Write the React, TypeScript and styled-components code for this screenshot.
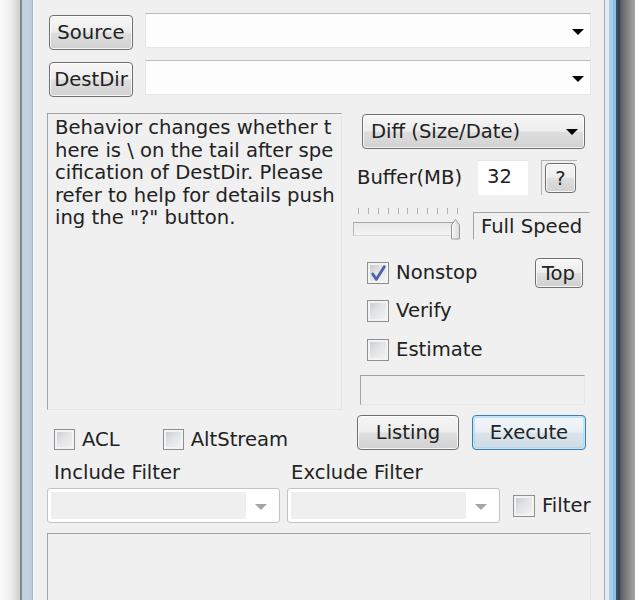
import React from "react";
import styled, { createGlobalStyle, css } from "styled-components";

const GlobalStyle = createGlobalStyle`
  html, body { margin: 0; padding: 0; background: #ffffff; }
  body { font-family: "DejaVu Sans", Verdana, sans-serif; }
`;

const INK = "#222222";
const FONT_SIZE = "19.6px";

const Screen = styled.div`
  display: flex;
  width: 635px;
  height: 600px;
  overflow: hidden;
`;

const DesktopShadow = styled.div<{ $side: "left" | "right" }>`
  flex: none;
  width: ${(p) => (p.$side === "left" ? 20 : 18)}px;
  background: ${(p) =>
    p.$side === "left"
      ? "linear-gradient(to right, #fbfbfb 0%, #ededed 55%, #cdcdcd 100%)"
      : "linear-gradient(to right, #585b5e 0%, #808080 40%, #b5b5b5 100%)"};
`;

const Frame = styled.div<{ $side: "left" | "right" }>`
  flex: none;
  width: ${(p) => (p.$side === "left" ? 15 : 16)}px;
  background: ${(p) =>
    p.$side === "left"
      ? "linear-gradient(to right, #80868d 0 2px, #c2d0e0 2px 9px, #bccde1 9px 12px, #a8b9cc 12px 13px, #f2f5f8 13px 15px)"
      : "linear-gradient(to right, #a9a9a9 0 1px, #e4edf5 1px 5px, #a9cbec 5px 9px, #92b9df 9px 12px, #2d5674 12px 14px, #3e444a 14px 16px)"};
`;

const Client = styled.div`
  flex: 1;
  box-sizing: border-box;
  background: #f0f0f0;
  padding: 13px 13px 0 12px;
  display: flex;
  flex-direction: column;
  color: ${INK};
  font-size: ${FONT_SIZE};
`;

const PathRow = styled.div<{ $first?: boolean }>`
  display: flex;
  align-items: flex-start;
  gap: 12px;
  margin-top: ${(p) => (p.$first ? 0 : 10)}px;
`;

const PushButton = styled.button<{ $w: number; $h: number; $default?: boolean }>`
  flex: none;
  box-sizing: border-box;
  width: ${(p) => p.$w}px;
  height: ${(p) => p.$h}px;
  padding: 0;
  font-family: inherit;
  font-size: ${FONT_SIZE};
  color: ${INK};
  border: 1px solid #707070;
  border-radius: 4px;
  background: linear-gradient(#f6f6f6 0%, #ededed 48%, #dedede 52%, #d1d1d1 100%);
  box-shadow: inset 0 0 0 1px rgba(255, 255, 255, 0.8);
  ${(p) =>
    p.$default &&
    css`
      border-color: #3b80b5;
      background: linear-gradient(#f2f7fa 0%, #e8eff4 48%, #d9e3ea 52%, #cfdbe4 100%);
      box-shadow: inset 0 0 0 1px #c4e6f8, inset 0 0 0 2px rgba(160, 214, 242, 0.6);
    `}
`;

const SideButton = styled(PushButton)`
  margin: 2px 0 0 2px;
`;

const PathCombo = styled.div`
  flex: 1;
  height: 35px;
  box-sizing: border-box;
  background: #fdfdfd;
  border: 1px solid #e4e6ea;
  border-top-color: #b9bbc0;
  display: flex;
  align-items: center;
  justify-content: flex-end;
  padding: 2px 6px 0 0;
`;

const Arrow = styled.span<{ $color: string; $size?: number }>`
  flex: none;
  width: 0;
  height: 0;
  border-left: ${(p) => p.$size ?? 6}px solid transparent;
  border-right: ${(p) => p.$size ?? 6}px solid transparent;
  border-top: ${(p) => p.$size ?? 6}px solid ${(p) => p.$color};
`;

const MainArea = styled.div`
  display: grid;
  grid-template-columns: 295px 1fr;
  column-gap: 11px;
  margin-top: 16px;
`;

const Column = styled.div`
  display: flex;
  flex-direction: column;
  align-items: flex-start;
`;

const SunkenPanel = styled.div<{ $w?: number; $h: number }>`
  flex: none;
  box-sizing: border-box;
  width: ${(p) => (p.$w ? `${p.$w}px` : "100%")};
  height: ${(p) => p.$h}px;
  border: 1px solid;
  border-color: #a3a3a3 #e6e6e6 #e6e6e6 #a3a3a3;
  background: #f0f0f0;
`;

const MessageBox = styled(SunkenPanel)`
  padding: 3px 0 0 7px;
  line-height: 22.5px;
  white-space: pre;
  overflow: hidden;
`;

const OptionRow = styled.div`
  display: flex;
  align-items: center;
  height: 21px;
  margin-top: 19px;
  padding-left: 7px;
  gap: 43px;
`;

const CheckItem = styled.label<{ $top?: number; $left?: number }>`
  display: flex;
  align-items: center;
  gap: 7px;
  margin-top: ${(p) => p.$top ?? 0}px;
  margin-left: ${(p) => p.$left ?? 0}px;
  line-height: 22px;
  white-space: nowrap;
`;

const CheckBox = styled.span<{ $size: number }>`
  flex: none;
  position: relative;
  box-sizing: border-box;
  width: ${(p) => p.$size}px;
  height: ${(p) => p.$size}px;
  border: 1px solid #8e8f8f;
  background: linear-gradient(135deg, #c4c7cb 0%, #e2e3e5 45%, #f5f5f5 100%);
  box-shadow: inset 0 0 0 2px #f3f3f3;
`;

const CheckMark = styled.svg`
  position: absolute;
  left: 2px;
  top: 1px;
`;

const DiffCombo = styled.div`
  box-sizing: border-box;
  width: 223px;
  height: 35px;
  margin: 1px 0 0 9px;
  padding: 0 6px 0 8px;
  display: flex;
  align-items: center;
  justify-content: space-between;
  border: 1px solid #707070;
  border-radius: 4px;
  background: linear-gradient(#f6f6f6 0%, #ededed 48%, #dedede 52%, #d1d1d1 100%);
  box-shadow: inset 0 0 0 1px rgba(255, 255, 255, 0.8);
  white-space: nowrap;
`;

const BufferRow = styled.div`
  display: flex;
  align-items: center;
  height: 35px;
  margin-top: 11px;
`;

const BufferLabel = styled.span`
  flex: none;
  width: 121px;
  margin-left: 4px;
  white-space: nowrap;
`;

const NumberField = styled.div`
  flex: none;
  box-sizing: border-box;
  width: 50px;
  height: 35px;
  padding: 0 0 4px 9px;
  background: #ffffff;
  border-top: 1px solid #e6e6e6;
  display: flex;
  align-items: center;
`;

const HelpFrame = styled.div`
  flex: none;
  box-sizing: border-box;
  width: 36px;
  height: 35px;
  margin-left: 13px;
  padding: 2px 0 0 3px;
  border-top: 1px solid #b3b3b3;
  border-left: 1px solid #b3b3b3;
`;

const SliderRow = styled.div`
  display: flex;
  align-items: flex-end;
  height: 35px;
  margin-top: 10px;
`;

const Slider = styled.div`
  flex: none;
  width: 108px;
  height: 35px;
  display: flex;
  flex-direction: column;
  position: relative;
`;

const Ticks = styled.div`
  display: flex;
  justify-content: space-between;
  width: 100px;
  margin: 3px 0 0 5px;
  height: 6px;
`;

const Tick = styled.span`
  width: 1px;
  height: 6px;
  background: #b0b0b0;
`;

const Track = styled.div`
  box-sizing: border-box;
  width: 101px;
  height: 14px;
  margin-top: 8px;
  border: 1px solid;
  border-color: #a6a6a6 #dadada #dadada #b6b6b6;
  border-right: 2px solid #7a7a7a;
  background: linear-gradient(#e8e8e8, #f4f4f4);
`;

const Thumb = styled.svg`
  position: absolute;
  left: 97px;
  top: 12px;
`;

const SpeedBox = styled(SunkenPanel)`
  margin-left: 12px;
  padding: 0 0 0 7px;
  display: flex;
  align-items: center;
  border-color: #a3a3a3 transparent transparent #a3a3a3;
  white-space: nowrap;
`;

const NonstopRow = styled.div`
  display: flex;
  align-items: center;
  justify-content: space-between;
  align-self: stretch;
  height: 30px;
  margin-top: 18px;
  padding: 0 8px 0 14px;
`;

const StatusBox = styled(SunkenPanel)`
  margin: 14px 0 0 7px;
`;

const ActionRow = styled.div`
  display: flex;
  gap: 13px;
  margin: 10px 0 0 4px;
`;

const FilterGrid = styled.div`
  display: grid;
  grid-template-columns: 233px 213px 1fr;
  grid-template-rows: 22px 35px;
  column-gap: 7px;
  row-gap: 4px;
  margin-top: 12px;
`;

const FilterLabel = styled.span<{ $pad: number }>`
  padding-left: ${(p) => p.$pad}px;
  line-height: 22px;
  white-space: nowrap;
`;

const FilterCombo = styled.div`
  box-sizing: border-box;
  height: 35px;
  border: 1px solid #c3c3c3;
  border-radius: 3px;
  background: #ffffff;
  padding: 3px;
  display: flex;
  align-items: center;
`;

const FilterField = styled.div`
  flex: 1;
  align-self: stretch;
  background: #efefef;
`;

const FilterButton = styled.div`
  flex: none;
  width: 30px;
  display: flex;
  justify-content: center;
  padding-top: 2px;
`;

const BottomBox = styled(SunkenPanel)`
  margin-top: 10px;
`;

function Check({ checked = false, size = 21 }: { checked?: boolean; size?: number }) {
  return (
    <CheckBox $size={size}>
      {checked && (
        <CheckMark width={size - 5} height={size - 4} viewBox="0 0 16 17">
          <path
            d="M2.5 9.5 L6 14.5 L13.5 2.5"
            fill="none"
            stroke="#4a62a6"
            strokeWidth="2.6"
            strokeLinecap="round"
            strokeLinejoin="round"
          />
        </CheckMark>
      )}
    </CheckBox>
  );
}

const MESSAGE = [
  "Behavior changes whether t",
  "here is \\ on the tail after spe",
  "cification of DestDir. Please",
  "refer to help for details push",
  'ing the "?" button.',
].join("\n");

export default function App() {
  return (
    <>
      <GlobalStyle />
      <Screen>
        <DesktopShadow $side="left" />
        <Frame $side="left" />
        <Client>
          <PathRow $first>
            <SideButton $w={84} $h={35}>Source</SideButton>
            <PathCombo>
              <Arrow $color="#000" />
            </PathCombo>
          </PathRow>
          <PathRow>
            <SideButton $w={84} $h={35}>DestDir</SideButton>
            <PathCombo>
              <Arrow $color="#000" />
            </PathCombo>
          </PathRow>

          <MainArea>
            <Column>
              <MessageBox $h={297}>{MESSAGE}</MessageBox>
              <OptionRow>
                <CheckItem>
                  <Check />
                  ACL
                </CheckItem>
                <CheckItem>
                  <Check />
                  AltStream
                </CheckItem>
              </OptionRow>
            </Column>

            <Column>
              <DiffCombo>
                <span>Diff (Size/Date)</span>
                <Arrow $color="#000" />
              </DiffCombo>
              <BufferRow>
                <BufferLabel>Buffer(MB)</BufferLabel>
                <NumberField>32</NumberField>
                <HelpFrame>
                  <PushButton $w={31} $h={30}>?</PushButton>
                </HelpFrame>
              </BufferRow>
              <SliderRow>
                <Slider>
                  <Ticks>
                    {Array.from({ length: 11 }).map((_, i) => (
                      <Tick key={i} />
                    ))}
                  </Ticks>
                  <Track />
                  <Thumb width="11" height="23" viewBox="0 0 11 23">
                    <defs>
                      <linearGradient id="thumbFill" x1="0" y1="0" x2="1" y2="0">
                        <stop offset="0" stopColor="#f8f8f8" />
                        <stop offset="1" stopColor="#dadada" />
                      </linearGradient>
                    </defs>
                    <path
                      d="M1.5 22 L1.5 8 L5.5 2.5 L9.5 8 L9.5 22 Z"
                      fill="url(#thumbFill)"
                      stroke="#9a9a9a"
                      strokeWidth="1"
                      strokeLinejoin="round"
                    />
                  </Thumb>
                </Slider>
                <SpeedBox $w={117} $h={28}>Full Speed</SpeedBox>
              </SliderRow>
              <NonstopRow>
                <CheckItem>
                  <Check checked size={22} />
                  Nonstop
                </CheckItem>
                <PushButton $w={48} $h={30}>Top</PushButton>
              </NonstopRow>
              <CheckItem $top={12} $left={14}>
                <Check size={22} />
                Verify
              </CheckItem>
              <CheckItem $top={17} $left={14}>
                <Check size={22} />
                Estimate
              </CheckItem>
              <StatusBox $w={225} $h={30} />
              <ActionRow>
                <PushButton $w={102} $h={35}>Listing</PushButton>
                <PushButton $w={114} $h={35} $default>Execute</PushButton>
              </ActionRow>
            </Column>
          </MainArea>

          <FilterGrid>
            <FilterLabel $pad={7}>Include Filter</FilterLabel>
            <FilterLabel $pad={4}>Exclude Filter</FilterLabel>
            <span />
            <FilterCombo>
              <FilterField />
              <FilterButton>
                <Arrow $color="#a5a5a5" $size={6} />
              </FilterButton>
            </FilterCombo>
            <FilterCombo>
              <FilterField />
              <FilterButton>
                <Arrow $color="#a5a5a5" $size={6} />
              </FilterButton>
            </FilterCombo>
            <CheckItem $left={6}>
              <Check size={22} />
              Filter
            </CheckItem>
          </FilterGrid>
          <BottomBox $h={80} />
        </Client>
        <Frame $side="right" />
        <DesktopShadow $side="right" />
      </Screen>
    </>
  );
}
